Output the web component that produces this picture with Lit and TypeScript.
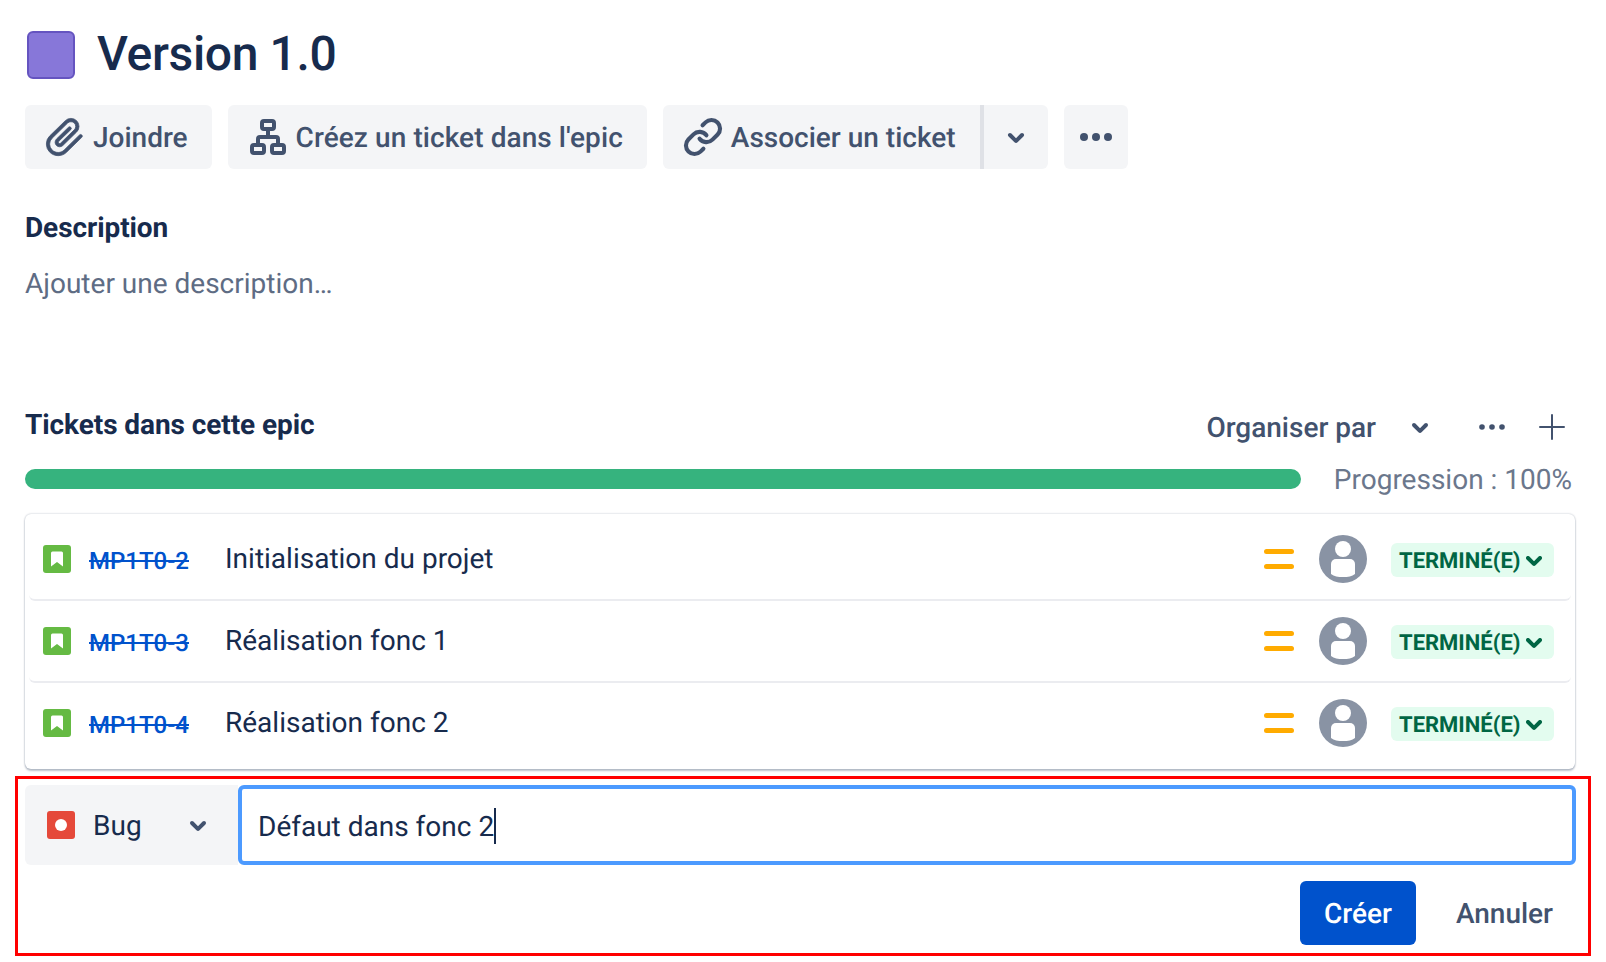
import { LitElement, html, css, svg } from "lit";
import { customElement } from "lit/decorators.js";

const chevron = svg`<path fill="currentColor" d="M8.292 10.293a1.009 1.009 0 000 1.419l2.939 2.965c.218.215.5.322.779.322s.556-.107.769-.322l2.93-2.955a1.01 1.01 0 000-1.419.987.987 0 00-1.406 0l-2.298 2.317-2.307-2.327a.99.99 0 00-1.406 0z"/>`;

const icon = (content: unknown, viewBox = "0 0 24 24") =>
  html`<svg class="icon" viewBox=${viewBox} width="48" height="48">${content}</svg>`;

const tickets = [
  { key: "MP1T0-2", title: "Initialisation du projet" },
  { key: "MP1T0-3", title: "Réalisation fonc 1" },
  { key: "MP1T0-4", title: "Réalisation fonc 2" },
];

@customElement("app-root")
export class AppRoot extends LitElement {
  static styles = css`
    :host {
      display: block;
      height: 962px;
      box-sizing: border-box;
      padding: 31px 30px 0 25px;
      background: #fff;
      color: #172b4d;
      font-family: Roboto, "Liberation Sans", sans-serif;
      font-size: 28px;
      text-rendering: geometricPrecision;
      overflow: hidden;
    }
    .icon { flex: none; display: block; }
    .title-row { display: flex; align-items: center; height: 48px; gap: 22px; padding-left: 2px; }
    .epic-icon {
      width: 48px; height: 48px; box-sizing: border-box;
      background: #8777d9; border: 2px solid #6554c0; border-radius: 6px;
    }
    h1 { margin: -2px 0 0; font-size: 48px; font-weight: 500; line-height: 48px; letter-spacing: -0.36px; }

    .actions { display: flex; gap: 16px; margin-top: 26px; color: #42526e; }
    .btn {
      display: flex; align-items: center; gap: 4px; height: 64px; box-sizing: border-box;
      padding: 0 24px 0 16px; background: #f4f5f7; border-radius: 6px;
      font-weight: 500; white-space: nowrap;
    }
    .btn.wide { letter-spacing: 0.08px; }
    .split { display: flex; }
    .split .btn:first-child { border-radius: 6px 0 0 6px; width: 317px; }
    .split .btn:last-child {
      border-radius: 0 6px 6px 0; border-left: 4px solid #dfe1e6;
      width: 68px; padding: 0; justify-content: center;
    }
    .more { width: 64px; padding: 0; justify-content: center; }

    h2 { margin: 0; font-size: 28px; font-weight: 700; line-height: 32px; letter-spacing: -0.08px; }
    .desc-title { margin-top: 43px; }
    .placeholder { margin-top: 20px; line-height: 40px; color: #5e6c84; }

    .tickets-head {
      display: flex; align-items: center; justify-content: space-between;
      height: 48px; margin-top: 100px;
    }
    .tickets-head h2 { margin-top: -6px; }
    .tools { display: flex; align-items: center; margin-top: -2px; color: #42526e; font-weight: 500; }
    .tools span { margin-right: 20px; }
    .tools .icon + .icon { margin-left: 24px; }
    .tools .icon:last-child { margin-left: 12px; }

    .progress { display: flex; align-items: center; gap: 33px; margin-top: 17px; height: 20px; padding-right: 4px; }
    .bar { flex: 1; height: 20px; border-radius: 10px; background: #36b37e; }
    .progress span { color: #6b778c; white-space: nowrap; }

    .card {
      margin: 25px 1px 0 0; padding: 5px 4px 4px; border-radius: 6px; background: #fff;
      box-shadow: 0 2px 2px rgba(9, 30, 66, 0.25), 0 0 2px rgba(9, 30, 66, 0.31);
    }
    .row {
      display: flex; align-items: center; height: 82px; box-sizing: border-box;
      padding: 0 17px 0 14px; border-bottom: 2px solid #ebecf0; border-radius: 6px;
    }
    .row:last-child { border-bottom-color: transparent; }
    .type { flex: none; width: 28px; height: 28px; display: block; }
    .key {
      width: 136px; margin: 3px 0 0 18px; flex: none; color: #0052cc; font-size: 24px;
      font-weight: 500; text-decoration: line-through;
    }
    .name { flex: 1; margin-top: -2px; }
    .priority { flex: none; display: block; margin-right: 25px; }
    .avatar { flex: none; display: block; margin-right: 24px; }
    .lozenge {
      display: flex; align-items: center; gap: 6px; height: 34px; width: 163px; box-sizing: border-box;
      margin-top: 2px; padding: 2px 8px 0; background: #e3fcef; color: #006644; border-radius: 6px;
      font-size: 22px; font-weight: 700; white-space: nowrap;
    }

    .form { position: relative; margin-top: 16px; }
    .create-row { display: flex; height: 80px; }
    .select {
      display: flex; align-items: center; width: 213px; flex: none; box-sizing: border-box;
      padding: 0 16px 0 22px; background: #f4f5f7; border-radius: 6px 0 0 6px;
    }
    .select label { flex: 1; margin-left: 18px; }
    .select .icon { color: #42526e; }
    .input {
      flex: 1; display: flex; align-items: center; box-sizing: border-box; padding: 2px 16px 0;
      border: 4px solid #4c9aff; border-radius: 6px; background: #fff;
    }
    .caret { width: 2px; height: 36px; background: #172b4d; }
    .form-actions { display: flex; justify-content: flex-end; align-items: center; margin-top: 16px; padding-right: 23px; font-weight: 500; }
    .primary {
      height: 64px; width: 116px; display: flex; align-items: center; justify-content: center;
      background: #0052cc; color: #fff; border-radius: 6px;
    }
    .cancel { margin-left: 40px; color: #42526e; }
    .highlight {
      position: absolute; top: -9px; left: -10px; right: -15px; bottom: -11px;
      border: 3px solid #ff0000; pointer-events: none;
    }
  `;

  render() {
    return html`
      <div class="title-row">
        <div class="epic-icon"></div>
        <h1>Version 1.0</h1>
      </div>

      <div class="actions">
        <div class="btn">
          ${icon(
            svg`<path fill="currentColor" stroke="currentColor" stroke-width="0.35" d="M11.643 17.965c-1.53 1.495-4.016 1.496-5.542.004a3.773 3.773 0 01.002-5.412l7.088-6.925a2.198 2.198 0 013.078 0 2.13 2.13 0 010 3.038l-6.294 6.148a.598.598 0 01-.838 0 .565.565 0 010-.817l5.503-5.377a.75.75 0 10-1.047-1.073l-5.504 5.377a2.065 2.065 0 000 2.963 2.098 2.098 0 002.934 0l6.294-6.15a3.63 3.63 0 000-5.22 3.698 3.698 0 00-5.174 0l-7.088 6.925a5.273 5.273 0 00-.002 7.558c2.11 2.062 5.538 2.06 7.638-.004l7.007-6.846a.75.75 0 10-1.048-1.073l-7.007 6.846z"/>`,
            "1 1 22 22"
          )}
          Joindre
        </div>
        <div class="btn wide">
          ${icon(svg`<g fill="none" stroke="currentColor" stroke-width="2">
            <rect x="9" y="4" width="6" height="4" rx="1"/>
            <rect x="4" y="16" width="6" height="4" rx="1"/>
            <rect x="14" y="16" width="6" height="4" rx="1"/>
            <path d="M12 8v4M7 16v-3a1 1 0 011-1h8a1 1 0 011 1v3"/>
          </g>`)}
          Créez un ticket dans l'epic
        </div>
        <div class="split">
          <div class="btn">
            ${icon(
              svg`<g fill="none" stroke="currentColor" stroke-width="2.4" stroke-linecap="round">
                <path d="M10 13a5 5 0 007.54.54l3-3a5 5 0 00-7.07-7.07l-1.72 1.71"/>
                <path d="M14 11a5 5 0 00-7.54-.54l-3 3a5 5 0 007.07 7.07l1.71-1.71"/>
              </g>`,
              "-2 -2 28 28"
            )}
            Associer un ticket
          </div>
          <div class="btn">${icon(chevron)}</div>
        </div>
        <div class="btn more">
          ${icon(svg`<g fill="currentColor"><circle cx="6" cy="12" r="2"/><circle cx="12" cy="12" r="2"/><circle cx="18" cy="12" r="2"/></g>`)}
        </div>
      </div>

      <h2 class="desc-title">Description</h2>
      <div class="placeholder">Ajouter une description…</div>

      <div class="tickets-head">
        <h2>Tickets dans cette epic</h2>
        <div class="tools">
          <span>Organiser par</span>
          ${icon(chevron)}
          ${icon(svg`<g fill="currentColor"><circle cx="7" cy="12" r="1.4"/><circle cx="12" cy="12" r="1.4"/><circle cx="17" cy="12" r="1.4"/></g>`)}
          ${icon(svg`<path fill="none" stroke="currentColor" stroke-width="1" stroke-linecap="round" d="M12 6v12M6 12h12"/>`)}
        </div>
      </div>

      <div class="progress">
        <div class="bar"></div>
        <span>Progression : 100%</span>
      </div>

      <div class="card">
        ${tickets.map(
          (t) => html`
            <div class="row">
              <svg class="type" viewBox="0 0 28 28">
                <rect width="28" height="28" rx="3" fill="#65ba43"/>
                <path fill="#fff" d="M8 8a1.5 1.5 0 011.5-1.5h9A1.5 1.5 0 0120 8v13.5l-6-4.5-6 4.5z"/>
              </svg>
              <span class="key">${t.key}</span>
              <span class="name">${t.title}</span>
              <svg class="priority" width="30" height="20" viewBox="0 0 30 20">
                <rect y="0" width="30" height="5" rx="2.5" fill="#ffab00"/>
                <rect y="15" width="30" height="5" rx="2.5" fill="#ffab00"/>
              </svg>
              <svg class="avatar" width="48" height="48" viewBox="0 0 48 48">
                <circle cx="24" cy="24" r="24" fill="#8993a4"/>
                <circle cx="24" cy="14" r="8" fill="#fff"/>
                <path fill="#fff" d="M12 29a5 5 0 015-5h14a5 5 0 015 5v10c-3 2.5-7 3-12 3s-9-.5-12-3z"/>
              </svg>
              <div class="lozenge">
                TERMINÉ(E)
                <svg width="16" height="10" viewBox="8 10 8 5" style="flex:none"><g>${chevron}</g></svg>
              </div>
            </div>
          `
        )}
      </div>

      <div class="form">
        <div class="create-row">
          <div class="select">
            <svg class="type" viewBox="0 0 28 28">
              <rect width="28" height="28" rx="3" fill="#e5493a"/>
              <circle cx="14" cy="14" r="6" fill="#fff"/>
            </svg>
            <label>Bug</label>
            ${icon(chevron)}
          </div>
          <div class="input">Défaut dans fonc 2<div class="caret"></div></div>
        </div>
        <div class="form-actions">
          <div class="primary">Créer</div>
          <div class="cancel">Annuler</div>
        </div>
        <div class="highlight"></div>
      </div>
    `;
  }
}
